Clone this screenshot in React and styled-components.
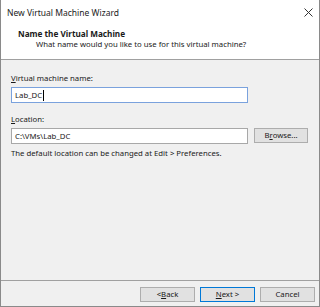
import styled, { createGlobalStyle } from "styled-components";

const Global = createGlobalStyle`
  html, body {
    margin: 0;
    padding: 0;
    background: #ffffff;
  }
  body {
    font-family: "Noto Sans", "Open Sans", sans-serif;
    font-size: 7.75px;
    color: #1a1a1a;
  }
`;

const Window = styled.div`
  width: 320px;
  height: 307px;
  box-sizing: border-box;
  border: 1px solid #8a8a8a;
  border-top: none;
  display: flex;
  flex-direction: column;
  background: #f0f0f0;
`;

const TitleBar = styled.div`
  height: 24px;
  background: #fff;
  display: flex;
  align-items: center;
  justify-content: space-between;
  padding: 1px 6px 0 6px;
  box-sizing: border-box;
  font-size: 8.5px;
  color: #222;
`;

const Header = styled.div`
  height: 36px;
  background: #fff;
  border-bottom: 1px solid #a0a0a0;
  padding: 4px 0 0 17px;
  box-sizing: border-box;
  line-height: 11px;
`;

const HeaderTitle = styled.div`
  font-weight: bold;
  font-size: 8.2px;
`;

const HeaderSub = styled.div`
  padding-left: 18px;
`;

const Body = styled.div`
  flex: 1;
  padding: 12px 9px 0 10px;
  display: flex;
  flex-direction: column;
`;

const Label = styled.div`
  line-height: 12px;
  margin-bottom: 3px;
  margin-top: ${(p) => p.$top || 0}px;
`;

const Row = styled.div`
  display: flex;
  gap: 6px;
  align-items: flex-start;
`;

const Field = styled.div`
  width: 237px;
  height: 16px;
  box-sizing: border-box;
  background: #fff;
  border: 1px solid ${(p) => (p.$focused ? "#7aa2dd" : "#a8a8a8")};
  display: flex;
  align-items: center;
  padding-left: 3px;
  white-space: nowrap;
`;

const Caret = styled.span`
  display: inline-block;
  width: 1px;
  height: 11px;
  background: #000;
  margin-left: 1px;
`;

const Button = styled.div`
  width: ${(p) => p.$w || 55}px;
  height: 15px;
  box-sizing: border-box;
  background: #e1e1e1;
  border: 1px solid ${(p) => (p.$primary ? "#0078d7" : "#adadad")};
  display: flex;
  align-items: center;
  justify-content: center;
  line-height: 1;
`;

const Note = styled.div`
  margin-top: 3px;
  line-height: 12px;
`;

const Footer = styled.div`
  height: 26px;
  border-top: 1px solid #a0a0a0;
  display: flex;
  justify-content: flex-end;
  gap: 5px;
  padding: 6px 4px 0 0;
  box-sizing: border-box;
`;

export default function App() {
  return (
    <>
      <Global />
      <Window>
        <TitleBar>
          <span>New Virtual Machine Wizard</span>
          <svg width="9" height="9" viewBox="0 0 9 9">
            <path d="M0.5 0.5 L8.5 8.5 M8.5 0.5 L0.5 8.5" stroke="#333" strokeWidth="1" />
          </svg>
        </TitleBar>
        <Header>
          <HeaderTitle>Name the Virtual Machine</HeaderTitle>
          <HeaderSub>What name would you like to use for this virtual machine?</HeaderSub>
        </Header>
        <Body>
          <Label>
            <u>V</u>irtual machine name:
          </Label>
          <Field $focused>
            Lab_DC
            <Caret />
          </Field>
          <Label $top={10}>
            <u>L</u>ocation:
          </Label>
          <Row>
            <Field>C:\VMs\Lab_DC</Field>
            <Button $w={54}>
              B<u>r</u>owse...
            </Button>
          </Row>
          <Note>The default location can be changed at Edit &gt; Preferences.</Note>
        </Body>
        <Footer>
          <Button>
            &lt; <u>B</u>ack
          </Button>
          <Button $primary>
            <u>N</u>ext &gt;
          </Button>
          <Button>Cancel</Button>
        </Footer>
      </Window>
    </>
  );
}
